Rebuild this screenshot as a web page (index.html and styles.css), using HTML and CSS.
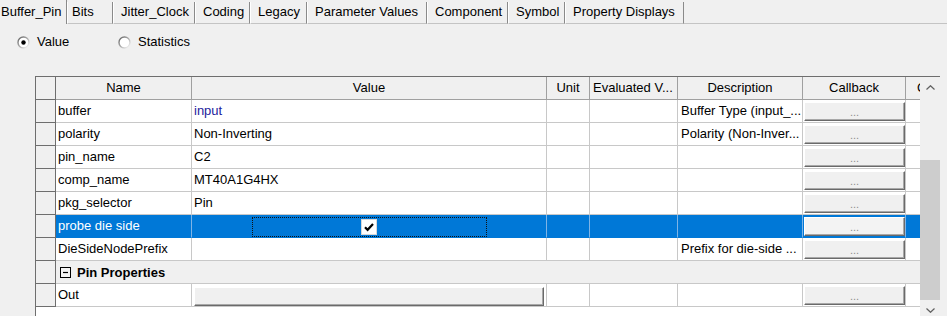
FILE: index.html
```html
<!DOCTYPE html>
<html>
<head>
<meta charset="utf-8">
<title>Buffer_Pin</title>
<link rel="stylesheet" href="styles.css">
</head>
<body>
<div class="tabs">
  <div class="tab active w1">Buffer_Pin</div>
  <div class="tab w2">Bits</div>
  <div class="tab w3">Jitter_Clock</div>
  <div class="tab w4">Coding</div>
  <div class="tab w5">Legacy</div>
  <div class="tab w6">Parameter Values</div>
  <div class="tab w7">Component</div>
  <div class="tab w8">Symbol</div>
  <div class="tab w9">Property Displays</div>
  <div class="tab-fill"></div>
</div>

<div class="radios">
  <div class="radio">
    <svg width="13" height="13" viewBox="0 0 13 13"><defs><linearGradient id="rg1" x1="0" y1="0" x2="1" y2="1"><stop offset="0" stop-color="#5f5f5f"/><stop offset="0.55" stop-color="#b5b5b5"/><stop offset="1" stop-color="#ffffff"/></linearGradient></defs><circle cx="6.5" cy="6.5" r="5.5" fill="#fff" stroke="url(#rg1)" stroke-width="1.4"/><circle cx="6.5" cy="6.5" r="2.2" fill="#000"/></svg>
    <span>Value</span>
  </div>
  <div class="radio">
    <svg width="13" height="13" viewBox="0 0 13 13"><defs><linearGradient id="rg2" x1="0" y1="0" x2="1" y2="1"><stop offset="0" stop-color="#5f5f5f"/><stop offset="0.55" stop-color="#b5b5b5"/><stop offset="1" stop-color="#ffffff"/></linearGradient></defs><circle cx="6.5" cy="6.5" r="5.5" fill="#fff" stroke="url(#rg2)" stroke-width="1.4"/></svg>
    <span>Statistics</span>
  </div>
</div>

<div class="frame">
  <div class="grid">
    <div class="row head">
      <div class="rh"></div>
      <div class="hc">Name</div>
      <div class="hc">Value</div>
      <div class="hc">Unit</div>
      <div class="hc left">Evaluated V...</div>
      <div class="hc">Description</div>
      <div class="hc">Callback</div>
      <div class="hc clip">C</div>
    </div>

    <div class="row">
      <div class="rh"></div>
      <div class="c">buffer</div>
      <div class="c link">input</div>
      <div class="c"></div>
      <div class="c"></div>
      <div class="c desc">Buffer Type (input_...</div>
      <div class="c cb"><div class="btn">...</div></div>
      <div class="c last"></div>
    </div>

    <div class="row">
      <div class="rh"></div>
      <div class="c">polarity</div>
      <div class="c">Non-Inverting</div>
      <div class="c"></div>
      <div class="c"></div>
      <div class="c desc">Polarity (Non-Inver...</div>
      <div class="c cb"><div class="btn">...</div></div>
      <div class="c last"></div>
    </div>

    <div class="row">
      <div class="rh"></div>
      <div class="c">pin_name</div>
      <div class="c">C2</div>
      <div class="c"></div>
      <div class="c"></div>
      <div class="c desc"></div>
      <div class="c cb"><div class="btn">...</div></div>
      <div class="c last"></div>
    </div>

    <div class="row">
      <div class="rh"></div>
      <div class="c">comp_name</div>
      <div class="c">MT40A1G4HX</div>
      <div class="c"></div>
      <div class="c"></div>
      <div class="c desc"></div>
      <div class="c cb"><div class="btn">...</div></div>
      <div class="c last"></div>
    </div>

    <div class="row">
      <div class="rh"></div>
      <div class="c">pkg_selector</div>
      <div class="c">Pin</div>
      <div class="c"></div>
      <div class="c"></div>
      <div class="c desc"></div>
      <div class="c cb"><div class="btn">...</div></div>
      <div class="c last"></div>
    </div>

    <div class="row sel">
      <div class="rh"></div>
      <div class="c">probe die side</div>
      <div class="c check-cell">
        <div class="focus">
          <svg class="chk" width="16" height="16" viewBox="0 0 16 16"><rect x="0.5" y="0.5" width="15" height="15" fill="#fff" stroke="#d8d8d8"/><path d="M4 8.2 L6.6 10.8 L12 5" fill="none" stroke="#000" stroke-width="2.2"/></svg>
        </div>
      </div>
      <div class="c"></div>
      <div class="c"></div>
      <div class="c desc"></div>
      <div class="c cb"><div class="btn btn-focus">...</div></div>
      <div class="c last"></div>
    </div>

    <div class="row">
      <div class="rh"></div>
      <div class="c">DieSideNodePrefix</div>
      <div class="c"></div>
      <div class="c"></div>
      <div class="c"></div>
      <div class="c desc">Prefix for die-side ...</div>
      <div class="c cb"><div class="btn">...</div></div>
      <div class="c last"></div>
    </div>

    <div class="row grp">
      <div class="rh"></div>
      <div class="gcell">
        <svg width="11" height="11" viewBox="0 0 11 11"><rect x="0.5" y="0.5" width="10" height="10" fill="#f4f4f4" stroke="#000"/><path d="M3 5.5 H8" stroke="#000" stroke-width="1.2"/></svg>
        <span>Pin Properties</span>
      </div>
    </div>

    <div class="row">
      <div class="rh"></div>
      <div class="c">Out</div>
      <div class="c vcell"><div class="btn vbtn"></div></div>
      <div class="c"></div>
      <div class="c"></div>
      <div class="c desc"></div>
      <div class="c cb"><div class="btn">...</div></div>
      <div class="c last"></div>
    </div>
  </div>

  <div class="scrollbar">
    <div class="sb-btn up">
      <svg width="9" height="5" viewBox="0 0 9 5"><polyline points="0.5,4.5 4.5,0.7 8.5,4.5" fill="none" stroke="#606060" stroke-width="1.2"/></svg>
    </div>
    <div class="sb-track"><div class="sb-thumb"></div></div>
    <div class="sb-btn down">
      <svg width="9" height="5" viewBox="0 0 9 5"><polyline points="0.5,0.5 4.5,4.3 8.5,0.5" fill="none" stroke="#606060" stroke-width="1.2"/></svg>
    </div>
  </div>
</div>
</body>
</html>
```

FILE: styles.css
```css
* { box-sizing: border-box; }

html, body {
  margin: 0;
  padding: 0;
}

body {
  background: #f0f0f0;
  font-family: "Liberation Sans", Arial, sans-serif;
  font-size: 13px;
  color: #000;
  width: 947px;
  height: 316px;
  overflow: hidden;
}

/* ---------- tabs ---------- */
.tabs {
  display: flex;
  height: 24px;
}

.tab {
  margin-top: 2px;
  height: 22px;
  line-height: 20px;
  padding-left: 7px;
  white-space: nowrap;
  border-left: 1px solid #ffffff;
  border-right: 1px solid #8a8a8a;
  border-bottom: 1px solid #c4c4c4;
  flex: none;
}

.tab.active {
  margin-top: 0;
  height: 24px;
  line-height: 24px;
  padding-left: 1px;
  border-left: none;
  border-bottom: none;
}

.w1 { width: 67px; }
.w2 { width: 46px; padding-left: 4px; }
.w3 { width: 82px; }
.w4 { width: 55px; }
.w5 { width: 57px; }
.w6 { width: 120px; }
.w7 { width: 81px; }
.w8 { width: 57px; }
.w9 { width: 119px; }

.tab-fill {
  flex: 1;
  border-bottom: 1px solid #c4c4c4;
}

/* ---------- radios ---------- */
.radios {
  display: flex;
  height: 52px;
  padding: 10px 0 0 17px;
}

.radio {
  display: flex;
  align-items: center;
  gap: 7px;
  height: 16px;
  line-height: 16px;
  width: 101px;
}

.radio svg { display: block; flex: none; }

/* ---------- property grid ---------- */
.frame {
  margin-left: 35px;
  width: 905px;
  height: 243px;
  display: flex;
  border-left: 1px solid #6e6e6e;
  border-top: 1px solid #6e6e6e;
}

.grid {
  width: 884px;
  background: #ffffff;
  display: flex;
  flex-direction: column;
}

.row {
  display: grid;
  grid-template-columns: 20px 136px 355px 43px 88px 125px 103px 14px;
  height: 23px;
}

.rh {
  background: #f0f0f0;
  border-right: 1px solid #6e6e6e;
  border-bottom: 1px solid #6e6e6e;
}

.hc {
  background: #f0f0f0;
  border-right: 1px solid #a0a0a0;
  border-bottom: 1px solid #a0a0a0;
  line-height: 22px;
  text-align: center;
  white-space: nowrap;
  overflow: hidden;
}

.hc.left {
  text-align: left;
  padding-left: 3px;
}

.hc.clip {
  text-align: left;
  padding-left: 11px;
  border-right: none;
}

.c {
  border-right: 1px solid #c8c8c8;
  border-bottom: 1px solid #c8c8c8;
  line-height: 22px;
  padding: 0 2px;
  white-space: nowrap;
  overflow: hidden;
}

.c.last { border-right: none; }
.c.desc { padding-left: 3px; }
.c.link { color: #22229c; }

.c.cb,
.c.vcell { padding: 0; }

.btn {
  background: #f0f0f0;
  border: 1px solid;
  border-color: #ffffff #6a6a6a #6a6a6a #ffffff;
  box-shadow: inset -1px -1px 0 #a8a8a8;
  height: 19px;
  margin: 2px 0 0 1px;
  width: 101px;
  color: #8e8e8e;
  font-size: 11px;
  line-height: 18px;
  text-align: center;
}

.btn-focus {
  background: #f3f3f3;
  border-color: #ffffff #6a6a6a #6a6a6a #ffffff;
}

.vbtn {
  width: 350px;
  margin: 3px 0 0 2px;
}

/* selected row */
.sel .c {
  background: #0078d7;
  color: #ffffff;
  border-bottom-color: #0078d7;
}

.sel .c { border-right-color: #7fb4e6; }
.sel .c.last { border-right: none; }

.check-cell {
  display: flex;
  justify-content: center;
  align-items: flex-start;
}

.focus {
  margin-top: 2px;
  width: 235px;
  height: 20px;
  border: 1px dotted #111;
  display: flex;
  justify-content: center;
  align-items: center;
}

.chk { display: block; }

/* group row */
.gcell {
  grid-column: 2 / -1;
  background: #f0f0f0;
  border-bottom: 1px solid #c8c8c8;
  display: flex;
  align-items: center;
  gap: 6px;
  padding-left: 4px;
  font-weight: bold;
}

.gcell svg { display: block; }

/* ---------- scrollbar ---------- */
.scrollbar {
  width: 20px;
  background: #f0f0f0;
  display: flex;
  flex-direction: column;
}

.sb-btn {
  height: 17px;
  display: flex;
  justify-content: center;
  align-items: center;
  flex: none;
}

.sb-btn.up { height: 20px; }

.sb-btn svg { display: block; }

.sb-track {
  flex: 1;
  display: flex;
  flex-direction: column;
  justify-content: flex-end;
}

.sb-thumb {
  height: 140px;
  margin-bottom: 2px;
  background: #cdcdcd;
}
```
